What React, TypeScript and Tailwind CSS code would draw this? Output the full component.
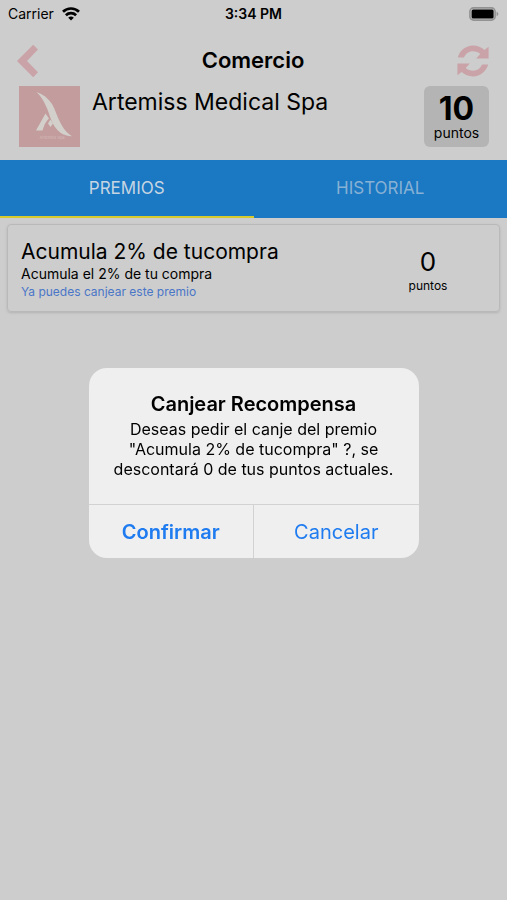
import React from "react";

function WifiIcon() {
  return (
    <svg viewBox="0 0 18 14" className="h-3.5 w-[18px]" fill="none" stroke="#000" strokeWidth="2.7" aria-hidden="true">
      <path d="M1 4.800a11.400 11.400 0 0 1 16 0" />
      <path d="M3.900 8.300a7.300 7.300 0 0 1 10.200 0" />
      <path d="M9 13.600 6.200 10.800a4 4 0 0 1 5.600 0z" fill="#000" stroke="none" />
    </svg>
  );
}

function BatteryIcon() {
  return (
    <svg viewBox="0 0 30 14" className="h-3.5 w-[30px]" aria-hidden="true">
      <rect x="0.900" y="0.900" width="25.200" height="12.200" rx="3.600" fill="none" stroke="#929292" strokeWidth="1.600" />
      <rect x="2.600" y="2.400" width="22" height="9.200" rx="1.500" fill="#000" />
      <path d="M27.600 4.800c2.200.7 2.200 3.700 0 4.400z" fill="#929292" />
    </svg>
  );
}

function BackIcon() {
  return (
    <svg viewBox="0 0 22 34" className="h-[34px] w-[22px]" fill="#c9a3a8" aria-hidden="true">
      <path d="M0 17 16.200.7 21 5.500 10 17l11 11.300-4.800 5z" />
    </svg>
  );
}

function RefreshIcon() {
  return (
    <svg viewBox="0 0 32 32" className="size-8" fill="#c9a3a8" aria-hidden="true">
      <path
        id="refresh-arrow"
        d="M.8 12.500C2.800 5.500 8.800.6 16 .6c4.400 0 8.400 1.600 11.400 4.300L31.600 1.800v11.700H19.200l4.100-4.400C21.300 7.300 18.800 6.300 16 6.300c-4.200 0-7.700 2.600-9 6.200z"
      />
      <use href="#refresh-arrow" transform="rotate(180 16 16)" />
    </svg>
  );
}

function Logo() {
  return (
    <svg viewBox="0 0 61 61" className="size-[61px] shrink-0" role="img" aria-label="Artemiss">
      <rect width="61" height="61" fill="#c39c9d" />
      <path d="M17.500 6C24 8 29 12 33 18c3.500 6 4.800 12 8 18 3.200 6 6 10.500 12 14.300-4-.1-8.500-1.300-11.500-3.500-5-3.800-7.500-8.500-9.800-14.300-1.700-4.500-2.700-8.500-5-13C24.500 14 21.500 10 17.500 6z" fill="#d3d0cb" />
      <path d="m26.500 27.500 3.500 5c-3.500 3-5 7-6.500 12H17z" fill="#d3d0cb" />
      <path d="m31.500 33.500 2.500 4-2.500 3.600-2.500-3.600z" fill="#d3d0cb" />
      <text x="33" y="53" textAnchor="middle" fontSize="4" fill="#d3bbb9" fontFamily="Inter, sans-serif">Artemiss Spa</text>
    </svg>
  );
}

export default function App() {
  return (
    <div className="min-h-screen bg-[#cdcdcd] font-['Inter',sans-serif] text-black">
      <header>
        <div className="grid h-7 grid-cols-3 items-center px-2 text-sm">
          <div className="flex items-center gap-2">
            <span>Carrier</span>
            <WifiIcon />
          </div>
          <time className="text-center font-semibold">3:34 PM</time>
          <div className="flex justify-end">
            <BatteryIcon />
          </div>
        </div>
        <div className="flex h-[58px] items-center justify-between pt-2 pr-[18px] pl-[17px]">
          <button type="button" aria-label="Volver" className="w-8">
            <BackIcon />
          </button>
          <h1 className="pb-0.5 text-[22px] font-semibold">Comercio</h1>
          <button type="button" aria-label="Actualizar">
            <RefreshIcon />
          </button>
        </div>
        <div className="flex items-start gap-3 pr-[18px] pb-[13px] pl-[19px]">
          <Logo />
          <h2 className="min-w-0 flex-1 text-[23px] leading-8">Artemiss Medical Spa</h2>
          <div className="flex h-[61px] w-[65px] flex-col items-center justify-center rounded-md bg-[#b4b4b4] pt-0.5">
            <span className="text-[32px] leading-7 font-bold">10</span>
            <span className="pt-0.5 text-sm leading-4">puntos</span>
          </div>
        </div>
      </header>

      <nav role="tablist" className="flex h-[58px] bg-[#1b78c2] text-[17px]">
        <button type="button" role="tab" aria-selected="true" className="flex-1 border-b-2 border-[#d8cb2e] pt-0.5 text-[#c5d5e3]">
          PREMIOS
        </button>
        <button type="button" role="tab" aria-selected="false" className="flex-1 border-b-2 border-transparent pt-0.5 text-[#87b1d5]">
          HISTORIAL
        </button>
      </nav>

      <main className="px-[7px] pt-1.5">
        <article className="flex h-[88px] items-center rounded-sm border border-[#b9b9b9] px-[13px] pt-1 shadow-sm">
          <div className="min-w-0 flex-1">
            <h3 className="text-[21px] leading-6">Acumula 2% de tucompra</h3>
            <p className="text-sm leading-5">Acumula el 2% de tu compra</p>
            <p className="text-xs leading-4 text-[#4a76c8]">Ya puedes canjear este premio</p>
          </div>
          <div className="flex w-[116px] flex-col items-center">
            <span className="text-[26px] leading-8">0</span>
            <span className="text-xs leading-4">puntos</span>
          </div>
        </article>
      </main>

      <div className="fixed inset-0 flex items-center justify-center pt-[25px]">
        <div role="alertdialog" aria-modal="true" aria-labelledby="dialog-title" aria-describedby="dialog-text" className="w-[330px] overflow-hidden rounded-[18px] bg-[#efefef] text-center">
          <div className="px-5 pt-[22px] pb-[25px]">
            <h2 id="dialog-title" className="pb-px text-xl font-semibold">Canjear Recompensa</h2>
            <p id="dialog-text" className="text-base leading-5">
              Deseas pedir el canje del premio "Acumula 2% de tucompra" ?, se descontará 0 de tus puntos actuales.
            </p>
          </div>
          <div className="flex h-[54px] border-t border-[#d2d2d2] text-xl text-[#1e7bf0]">
            <button type="button" className="flex-1 border-r border-[#d2d2d2] pt-0.5 font-semibold">Confirmar</button>
            <button type="button" className="flex-1 pt-0.5">Cancelar</button>
          </div>
        </div>
      </div>
    </div>
  );
}
